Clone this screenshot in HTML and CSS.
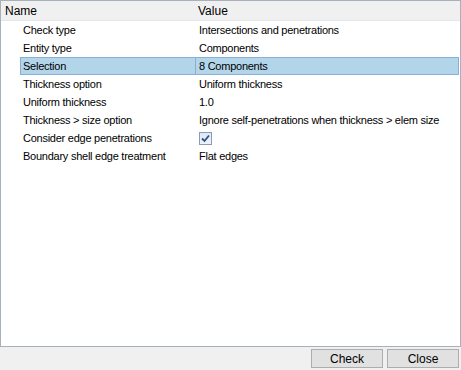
FILE: index.html
```html
<!DOCTYPE html>
<html lang="en">
<head>
    <meta charset="UTF-8">
    <title>Penetration Check</title>
    <link rel="stylesheet" href="styles.css">
</head>
<body>
    <div class="grid-panel">
        <div class="header">
            <div class="head-name">Name</div>
            <div class="head-value">Value</div>
        </div>
        <div class="rows">
            <div class="row"><div class="cell-name">Check type</div><div class="cell-value">Intersections and penetrations</div></div>
            <div class="row"><div class="cell-name">Entity type</div><div class="cell-value">Components</div></div>
            <div class="row selected"><div class="cell-name">Selection</div><div class="cell-value">8 Components</div></div>
            <div class="row"><div class="cell-name">Thickness option</div><div class="cell-value">Uniform thickness</div></div>
            <div class="row"><div class="cell-name">Uniform thickness</div><div class="cell-value">1.0</div></div>
            <div class="row"><div class="cell-name">Thickness &gt; size option</div><div class="cell-value">Ignore self-penetrations when thickness &gt; elem size</div></div>
            <div class="row">
                <div class="cell-name">Consider edge penetrations</div>
                <div class="cell-value">
                    <span class="checkbox">
                        <svg width="9" height="9" viewBox="0 0 9 9"><path d="M1 4.5 L3.5 7 L8 1.5" fill="none" stroke="#2a4f8a" stroke-width="1.8"/></svg>
                    </span>
                </div>
            </div>
            <div class="row"><div class="cell-name">Boundary shell edge treatment</div><div class="cell-value">Flat edges</div></div>
        </div>
    </div>

    <div class="footer">
        <button type="button" class="btn">Check</button>
        <button type="button" class="btn">Close</button>
    </div>
</body>
</html>
```

FILE: styles.css
```css
body {
    margin: 0;
    background: #f0f0f0;
    font-family: 'Liberation Sans', Arial, sans-serif;
    font-size: 11px;
    color: #000;
    width: 461px;
    height: 370px;
    overflow: hidden;
}

.grid-panel {
    height: 345px;
    border: 1px solid #a7b1bc;
    background: #fff;
}

.header {
    display: grid;
    grid-template-columns: 193px 1fr;
    height: 19px;
    background: #f0f0f0;
    border-bottom: 1px solid #e3e6ea;
    align-items: center;
}

.head-name {
    padding-left: 4px;
    font-size: 12px;
}

.head-value {
    padding-left: 4px;
    font-size: 12px;
}

.rows {
    padding-left: 19px;
    padding-right: 1px;
}

.row {
    display: grid;
    grid-template-columns: 174px 1fr;
    height: 18px;
    align-items: center;
    border: 1px solid transparent;
    box-sizing: border-box;
    letter-spacing: -0.25px;
}

.cell-name {
    padding-left: 2px;
}

.cell-value {
    padding-left: 4px;
    display: flex;
    align-items: center;
    height: 100%;
}

.row.selected {
    background: #b3d5ea;
    border-color: #8aaed6;
}

.row.selected .cell-value {
    border-left: 1px solid #8aaed6;
    padding-left: 3px;
}

.checkbox {
    display: flex;
    align-items: center;
    justify-content: center;
    width: 11px;
    height: 11px;
    border: 1px solid #8a9cb3;
    background: linear-gradient(#dfe8f3, #eef3f9);
}

.footer {
    display: flex;
    justify-content: flex-end;
    gap: 4px;
    padding: 2px 2px 0 0;
}

.btn {
    width: 72px;
    height: 19px;
    padding: 0;
    border: 1px solid #adadad;
    background: #e1e1e1;
    font-family: 'Liberation Sans', Arial, sans-serif;
    font-size: 12px;
    color: #000;
}
```
